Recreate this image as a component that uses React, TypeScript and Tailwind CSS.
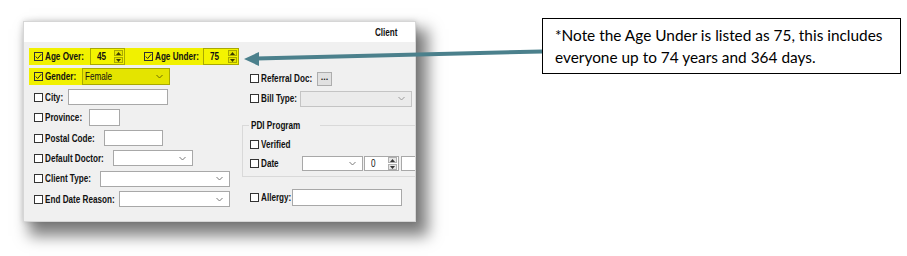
import React from "react";

function T({
  children,
  bold = true,
  right = false,
}: {
  children: React.ReactNode;
  bold?: boolean;
  right?: boolean;
}) {
  return (
    <span
      className={`inline-block scale-x-[0.74] whitespace-nowrap text-[11px] leading-[13px] text-[#111] ${
        right ? "origin-right" : "origin-left"
      } ${bold ? "font-bold" : "font-normal"}`}
    >
      {children}
    </span>
  );
}

function Box({ checked = false }: { checked?: boolean }) {
  return (
    <span
      className={`flex h-[9px] w-[9px] shrink-0 items-center justify-center border border-[#333] ${
        checked ? "bg-transparent" : "bg-white"
      }`}
    >
      {checked && (
        <svg width="7" height="7" viewBox="0 0 7 7">
          <path d="M0.8 3.6 L2.7 5.5 L6.3 1.2" stroke="#222" strokeWidth="1" fill="none" />
        </svg>
      )}
    </span>
  );
}

function Chevron({ color = "#777" }: { color?: string }) {
  return (
    <svg width="7" height="5" viewBox="0 0 7 5" className="shrink-0">
      <path d="M0.5 1 L3.5 4 L6.5 1" stroke={color} strokeWidth="1" fill="none" />
    </svg>
  );
}

function Select({
  className,
  value,
  hl = false,
  disabled = false,
}: {
  className: string;
  value?: string;
  hl?: boolean;
  disabled?: boolean;
}) {
  const tone = hl
    ? "border-[#a9a900] bg-[#e4e400]"
    : disabled
    ? "border-[#c4c4c4] bg-[#ebebeb]"
    : "border-[#a8a8a8] bg-white";
  return (
    <div className={`flex shrink-0 items-center justify-between border pl-[2px] pr-[6px] ${tone} ${className}`}>
      <span className="flex items-center overflow-hidden">{value ? <T bold={false}>{value}</T> : null}</span>
      <Chevron color={hl ? "#6d6d00" : disabled ? "#9a9a9a" : "#7a7a7a"} />
    </div>
  );
}

function Input({ className }: { className: string }) {
  return <div className={`shrink-0 border border-[#a8a8a8] bg-white ${className}`} />;
}

function Tri({ up, color }: { up: boolean; color: string }) {
  return (
    <svg width="5" height="3" viewBox="0 0 5 3">
      <path d={up ? "M0 3 L2.5 0 L5 3 Z" : "M0 0 L2.5 3 L5 0 Z"} fill={color} />
    </svg>
  );
}

function Spin({
  className,
  value,
  hl = false,
  bold = false,
}: {
  className: string;
  value: string;
  hl?: boolean;
  bold?: boolean;
}) {
  const btn = hl ? "border-[#a9a900] bg-[#e6e600]" : "border-[#b0b0b0] bg-[#e6e6e6]";
  const tri = hl ? "#3a3a00" : "#333";
  return (
    <div
      className={`flex shrink-0 items-center justify-between border pl-[6px] pr-[1px] ${
        hl ? "border-[#a9a900] bg-[#f4f400]" : "border-[#a8a8a8] bg-white"
      } ${className}`}
    >
      <span className="flex items-center">
        <T bold={bold}>{value}</T>
      </span>
      <div className="flex flex-col gap-[1px]">
        <div className={`flex h-[6px] w-[9px] items-center justify-center border ${btn}`}>
          <Tri up color={tri} />
        </div>
        <div className={`flex h-[6px] w-[9px] items-center justify-center border ${btn}`}>
          <Tri up={false} color={tri} />
        </div>
      </div>
    </div>
  );
}

function Label({ className, children }: { className: string; children: React.ReactNode }) {
  return (
    <div className={`ml-[2px] flex shrink-0 items-center ${className}`}>
      <T>{children}</T>
    </div>
  );
}

function Window() {
  return (
    <div className="ml-[23px] mt-[21px] flex h-[201px] w-[393px] shrink-0 flex-col overflow-hidden border border-[#d6d6d6] bg-[#f0f0f0] shadow-[0_0_6px_rgba(0,0,0,0.16),9px_11px_14px_3px_rgba(0,0,0,0.5)]">
      <div className="flex h-[20px] shrink-0 items-center justify-end bg-white pr-[17px]">
        <T right>Client</T>
      </div>
      <div className="flex flex-1">
        {/* left column */}
        <div className="flex w-[218px] shrink-0 flex-col gap-[3.4px] pl-[5px] pt-[6px]">
          <div className="flex h-[17px] w-[210px] items-center bg-[#f1f100] pl-[5px]">
            <Box checked />
            <Label className="w-[45px]">Age Over:</Label>
            <Spin className="h-[17px] w-[35px]" value="45" hl bold />
            <span className="ml-[19px]" />
            <Box checked />
            <Label className="w-[48px]">Age Under:</Label>
            <Spin className="h-[17px] w-[36px]" value="75" hl bold />
          </div>
          <div className="flex h-[17px] w-[141px] items-center bg-[#f1f100] pl-[5px]">
            <Box checked />
            <Label className="w-[37px]">Gender:</Label>
            <Select className="h-[17px] w-[88px]" value="Female" hl />
          </div>
          <div className="flex h-[17px] items-center pl-[5px]">
            <Box />
            <Label className="w-[23px]">City:</Label>
            <Input className="h-[16px] w-[100px]" />
          </div>
          <div className="flex h-[17px] items-center pl-[5px]">
            <Box />
            <Label className="w-[44px]">Province:</Label>
            <Input className="h-[17px] w-[31px]" />
          </div>
          <div className="flex h-[17px] items-center pl-[5px]">
            <Box />
            <Label className="w-[59px]">Postal Code:</Label>
            <Input className="h-[16px] w-[59px]" />
          </div>
          <div className="flex h-[17px] items-center pl-[5px]">
            <Box />
            <Label className="w-[68px]">Default Doctor:</Label>
            <Select className="h-[16px] w-[80px]" />
          </div>
          <div className="flex h-[17px] items-center pl-[5px]">
            <Box />
            <Label className="w-[55px]">Client Type:</Label>
            <Select className="h-[16px] w-[130px]" />
          </div>
          <div className="flex h-[17px] items-center pl-[5px]">
            <Box />
            <Label className="w-[74px]">End Date Reason:</Label>
            <Select className="h-[16px] w-[111px]" />
          </div>
        </div>

        {/* right column */}
        <div className="flex w-[173px] shrink-0 flex-col overflow-hidden pt-[28px]">
          <div className="flex h-[17px] items-center pl-[8px]">
            <Box />
            <Label className="w-[56px]">Referral Doc:</Label>
            <div className="flex h-[14px] w-[15px] shrink-0 items-center justify-center border border-[#adadad] bg-[#e1e1e1]">
              <span className="mb-[3px] text-[9px] font-bold leading-none text-[#222]">...</span>
            </div>
          </div>
          <div className="mt-[3px] flex h-[17px] items-center pl-[8px]">
            <Box />
            <Label className="w-[39px]">Bill Type:</Label>
            <Select className="h-[16px] w-[112px]" disabled />
          </div>
          <fieldset className="mt-[12px] w-[200px] min-w-0 shrink-0 border border-[#d9d9d9] pb-[4px] pl-[7px] leading-[13px]">
            <legend className="-ml-[1px] flex h-[13px] items-center px-[2px] leading-[13px]">
              <T>PDI Program</T>
            </legend>
            <div className="mt-[4px] flex h-[17px] items-center">
              <Box />
              <Label className="w-[40px]">Verified</Label>
            </div>
            <div className="mt-[2px] flex h-[17px] items-center">
              <Box />
              <Label className="w-[41px]">Date</Label>
              <Select className="h-[15px] w-[61px]" />
              <Spin className="ml-[1px] h-[15px] w-[35px]" value="0" />
              <Input className="ml-[2px] h-[15px] w-[40px]" />
            </div>
          </fieldset>
          <div className="mt-[12px] flex h-[17px] items-center pl-[8px]">
            <Box />
            <Label className="w-[31px]">Allergy:</Label>
            <Input className="h-[17px] w-[110px]" />
          </div>
        </div>
      </div>
    </div>
  );
}

export default function App() {
  return (
    <div className="relative h-[256px] w-[907px] overflow-hidden bg-white font-['Liberation_Sans',Arial,sans-serif]">
      <div className="flex items-start">
        <Window />
        <div className="ml-[126px] mt-[18px] h-[56px] w-[359px] shrink-0 border border-black pl-[12px] pt-[5px] font-['Lato',sans-serif] text-[15.4px] leading-[22px] text-black">
          <div className="whitespace-nowrap">*Note the Age Under is listed as 75, this includes</div>
          <div className="whitespace-nowrap">everyone up to 74 years and 364 days.</div>
        </div>
      </div>
      <svg
        className="pointer-events-none absolute inset-0"
        width="907"
        height="256"
        viewBox="0 0 907 256"
      >
        <line x1="256" y1="58.5" x2="542" y2="51.5" stroke="#4b808c" strokeWidth="4" />
        <polygon points="244,59 259,52 259,66" fill="#4b808c" />
      </svg>
    </div>
  );
}
